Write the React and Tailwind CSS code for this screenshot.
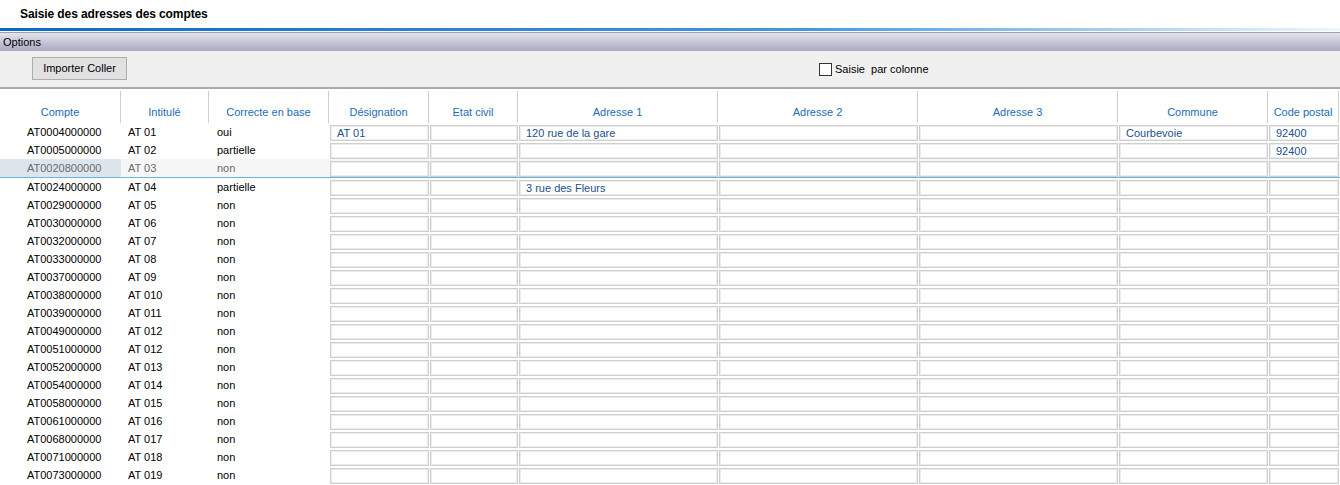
import React from 'react';

const columns = [
    { key: 'compte', label: 'Compte', width: 'w-[121px]' },
    { key: 'intitule', label: 'Intitulé', width: 'w-[88px]' },
    { key: 'correcte', label: 'Correcte en base', width: 'w-[120px]' },
    { key: 'designation', label: 'Désignation', width: 'w-[100px]', input: true },
    { key: 'etat', label: 'Etat civil', width: 'w-[89px]', input: true },
    { key: 'adr1', label: 'Adresse 1', width: 'w-[200px]', input: true },
    { key: 'adr2', label: 'Adresse 2', width: 'w-[200px]', input: true },
    { key: 'adr3', label: 'Adresse 3', width: 'w-[200px]', input: true },
    { key: 'commune', label: 'Commune', width: 'w-[150px]', input: true },
    { key: 'cp', label: 'Code postal', width: 'w-[71px]', input: true },
];

const rows = [
    { compte: 'AT0004000000', intitule: 'AT 01', correcte: 'oui', designation: 'AT 01', adr1: '120 rue de la gare', commune: 'Courbevoie', cp: '92400' },
    { compte: 'AT0005000000', intitule: 'AT 02', correcte: 'partielle', cp: '92400' },
    { compte: 'AT0020800000', intitule: 'AT 03', correcte: 'non', selected: true },
    { compte: 'AT0024000000', intitule: 'AT 04', correcte: 'partielle', adr1: '3 rue des Fleurs' },
    { compte: 'AT0029000000', intitule: 'AT 05', correcte: 'non' },
    { compte: 'AT0030000000', intitule: 'AT 06', correcte: 'non' },
    { compte: 'AT0032000000', intitule: 'AT 07', correcte: 'non' },
    { compte: 'AT0033000000', intitule: 'AT 08', correcte: 'non' },
    { compte: 'AT0037000000', intitule: 'AT 09', correcte: 'non' },
    { compte: 'AT0038000000', intitule: 'AT 010', correcte: 'non' },
    { compte: 'AT0039000000', intitule: 'AT 011', correcte: 'non' },
    { compte: 'AT0049000000', intitule: 'AT 012', correcte: 'non' },
    { compte: 'AT0051000000', intitule: 'AT 012', correcte: 'non' },
    { compte: 'AT0052000000', intitule: 'AT 013', correcte: 'non' },
    { compte: 'AT0054000000', intitule: 'AT 014', correcte: 'non' },
    { compte: 'AT0058000000', intitule: 'AT 015', correcte: 'non' },
    { compte: 'AT0061000000', intitule: 'AT 016', correcte: 'non' },
    { compte: 'AT0068000000', intitule: 'AT 017', correcte: 'non' },
    { compte: 'AT0071000000', intitule: 'AT 018', correcte: 'non' },
    { compte: 'AT0073000000', intitule: 'AT 019', correcte: 'non' },
];

export default function App() {
    return (
        <div className="w-[1340px] h-[485px] overflow-hidden bg-white text-[11px] text-black font-['Liberation_Sans',Arial,sans-serif]">
            {/* Title */}
            <div className="h-[28px] flex items-center pl-[20px]">
                <span className="text-[12px] font-bold tracking-[-0.1px]">Saisie des adresses des comptes</span>
            </div>
            <div className="h-[3px] bg-gradient-to-r from-[#0968c8] via-[#3f98e0] via-60% to-[#eef6fc]" />
            <div className="h-[1px] bg-white" />

            {/* Options bar */}
            <div className="h-[19px] border-t border-[#a0a0a0] bg-gradient-to-b from-[#e4e4ee] to-[#a9a9c1] flex items-center pl-[3px]">
                <span>Options</span>
            </div>

            {/* Toolbar */}
            <div className="h-[38px] bg-[#f0f0f0] border-b-2 border-[#a8a8a8] flex items-start relative">
                <button className="ml-[32px] mt-[6px] w-[95px] h-[23px] bg-[#e1e1e1] border border-[#adadad] text-[11px] text-black">
                    Importer Coller
                </button>
                <label className="absolute left-[819px] top-[10px] flex items-center gap-[3px]">
                    <span className="w-[13px] h-[13px] border border-[#333] bg-white" />
                    <span className="text-[11px]">Saisie&nbsp; par colonne</span>
                </label>
            </div>

            {/* Header */}
            <div className="flex h-[34px] pt-[2px]">
                {columns.map((col) => (
                    <div
                        key={col.key}
                        className={`${col.width} shrink-0 border-r border-[#c8d1da] flex items-end justify-center pb-[3px] text-[#1c6db6]`}
                    >
                        {col.label}
                    </div>
                ))}
            </div>

            {/* Rows */}
            <div>
                {rows.map((row) => (
                    <div
                        key={row.compte}
                        className={`flex ${row.selected ? 'h-[19px] bg-[#f6f6f6] border-b border-[#6cb4e4] text-[#6b6b6b]' : 'h-[18px]'}`}
                    >
                        {columns.map((col) => {
                            if (col.input) {
                                return (
                                    <div key={col.key} className={`${col.width} shrink-0 pl-[1px] pt-[2px]`}>
                                        <div className="h-[16px] bg-white border border-[#cfcfcf] shadow-[inset_0_0_0_1px_#ececec] flex items-center pl-[6px] text-[#1d4f8c] whitespace-nowrap overflow-hidden">
                                            {row[col.key] || ''}
                                        </div>
                                    </div>
                                );
                            }
                            if (col.key === 'compte') {
                                return (
                                    <div
                                        key={col.key}
                                        className={`${col.width} shrink-0 flex items-center pl-[27px] ${row.selected ? 'bg-[#dde5ec]' : ''}`}
                                    >
                                        {row.compte}
                                    </div>
                                );
                            }
                            return (
                                <div
                                    key={col.key}
                                    className={`${col.width} shrink-0 flex items-center ${col.key === 'intitule' ? 'pl-[7px]' : 'pl-[8px]'}`}
                                >
                                    {row[col.key]}
                                </div>
                            );
                        })}
                    </div>
                ))}
            </div>
        </div>
    );
}
